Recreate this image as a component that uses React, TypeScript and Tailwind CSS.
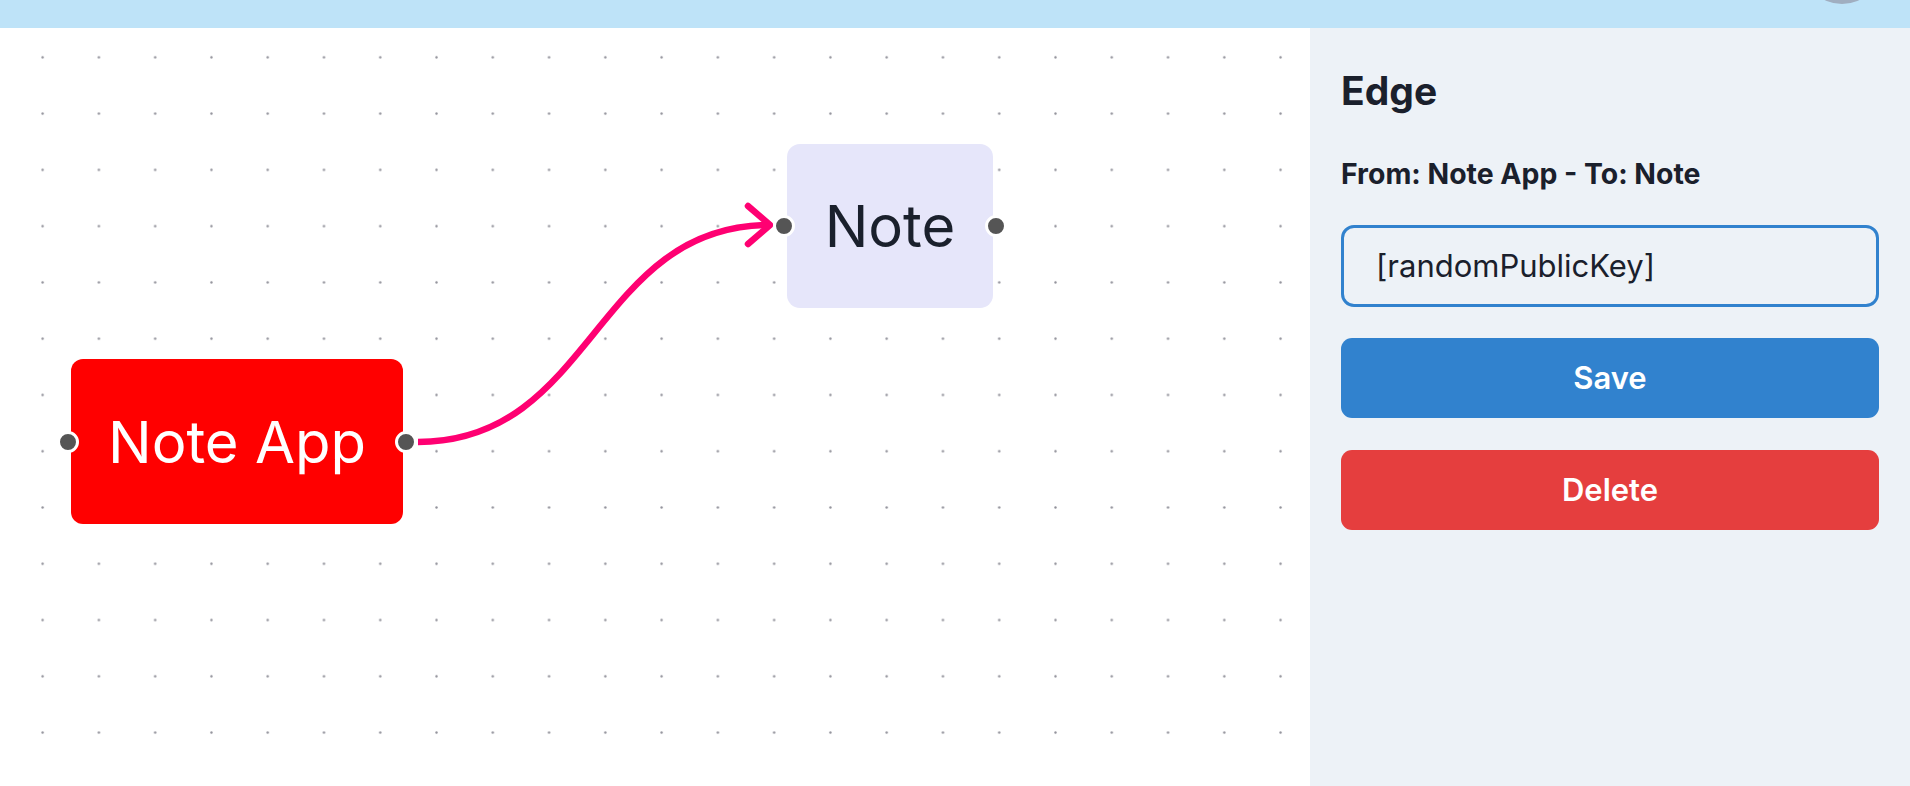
import React from "react";

function Handle({ side }: { side: "left" | "right" }) {
  return (
    <div
      className={
        "absolute top-1/2 -translate-y-1/2 w-[22px] h-[22px] rounded-full bg-[#555555] border-[3px] border-white " +
        (side === "left" ? "left-[-14px]" : "right-[-14px]")
      }
    />
  );
}

export default function App() {
  return (
    <div className="w-full h-screen flex flex-col overflow-hidden font-['Inter','Noto_Sans',sans-serif] bg-white">
      <header className="relative h-[28px] shrink-0 bg-[#bee3f8] overflow-hidden">
        <div className="absolute right-[28px] top-[-76px] w-[80px] h-[80px] rounded-full bg-[#a0aec0]" />
      </header>
      <div className="flex flex-1 min-h-0">
        <div className="relative w-[1310px] shrink-0 bg-white overflow-hidden">
          <svg className="absolute inset-0 w-full h-full">
            <defs>
              <pattern
                id="dots"
                patternUnits="userSpaceOnUse"
                x={14.5}
                y={1.2}
                width={56.27}
                height={56.27}
              >
                <circle cx={28.135} cy={28.135} r={1.2} fill="#91919a" />
              </pattern>
            </defs>
            <rect width="100%" height="100%" fill="url(#dots)" />
          </svg>
          <svg className="absolute inset-0 w-full h-full">
            <path
              d="M418,414 C594,414 594,197 770,197"
              fill="none"
              stroke="#ff0072"
              strokeWidth={6.5}
            />
            <polyline
              points="748,178 770,197 748,216"
              fill="none"
              stroke="#ff0072"
              strokeWidth={6.5}
              strokeLinecap="round"
              strokeLinejoin="round"
            />
          </svg>
          <div className="absolute left-[71px] top-[331px] w-[332px] h-[165px] rounded-[12px] bg-[#ff0000] flex items-center justify-center">
            <Handle side="left" />
            <span className="text-white text-[58px] leading-[70px]">Note App</span>
            <Handle side="right" />
          </div>
          <div className="absolute left-[787px] top-[116px] w-[206px] h-[164px] rounded-[13px] bg-[#e6e6fa] flex items-center justify-center">
            <Handle side="left" />
            <span className="text-[#1a202c] text-[58px] leading-[70px]">Note</span>
            <Handle side="right" />
          </div>
        </div>
        <aside className="flex-1 bg-[#edf2f7] pt-[40px] px-[31px] flex flex-col">
          <h2 className="text-[39px] leading-[46px] font-bold text-[#1a202c]">Edge</h2>
          <p className="mt-[43px] text-[28.4px] leading-[34px] font-bold text-[#1a202c]">
            From: Note App - To: Note
          </p>
          <div className="mt-[34px] h-[82px] rounded-[13px] border-[3px] border-[#3182ce] flex items-center pl-[32px]">
            <span className="text-[31px] leading-[36px] text-[#1a202c]">[randomPublicKey]</span>
          </div>
          <button className="mt-[31px] h-[80px] rounded-[11px] bg-[#3182ce] text-white text-[31px] font-semibold flex items-center justify-center">
            Save
          </button>
          <button className="mt-[32px] h-[80px] rounded-[11px] bg-[#e53e3e] text-white text-[31px] font-semibold flex items-center justify-center">
            Delete
          </button>
        </aside>
      </div>
    </div>
  );
}
